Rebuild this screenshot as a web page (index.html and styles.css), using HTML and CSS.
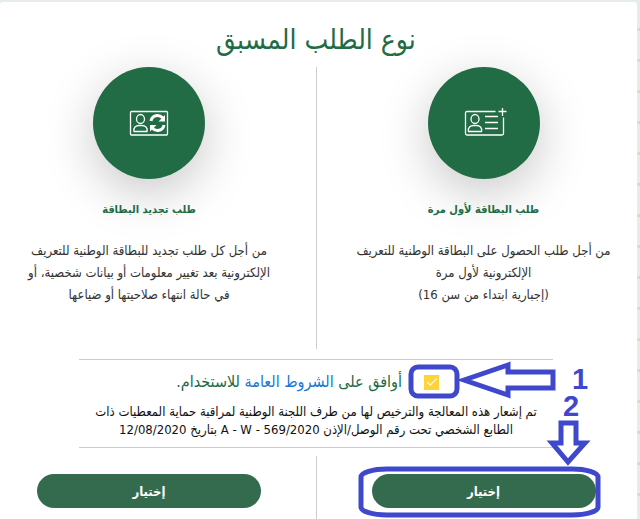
FILE: index.html
```html
<!DOCTYPE html>
<html lang="ar" dir="rtl">
<head>
  <meta charset="UTF-8">
  <meta name="viewport" content="width=device-width, initial-scale=1.0">
  <title>نوع الطلب المسبق</title>
  <link rel="stylesheet" href="styles.css">
</head>
<body>
  <main class="card">
    <h1 class="title">نوع الطلب المسبق</h1>

    <!-- Request types -->
    <div class="columns">
      <section class="column">
        <div class="circle">
          <svg class="icon" viewBox="-2 1 42 28" aria-hidden="true">
            <path d="M30.500 3.500H2q-1.500 0-1.500 1.500v20.500q0 1.500 1.500 1.500h35q1.500 0 1.500-1.500V9.500" />
            <ellipse cx="10" cy="11" rx="4" ry="4.500" />
            <path d="M3.500 23.500c-1-4 2-6 5-6h3c3 0 6 2 5 6zM20 8.500h13M20 14.500h13M20 20.500h13M37.500 0v8M33.500 3.500h8" />
          </svg>
        </div>
        <h2 class="subtitle">طلب البطاقة لأول مرة</h2>
        <p class="text">من أجل طلب الحصول على البطاقة الوطنية للتعريف<br>الإلكترونية لأول مرة<br>(إجبارية ابتداء من سن 16)</p>
      </section>
      <section class="column">
        <div class="circle">
          <svg class="icon" viewBox="-1 1 42 28" aria-hidden="true">
            <rect x="1.500" y="3.500" width="37" height="23.500" rx="1" />
            <ellipse cx="11.500" cy="11" rx="4" ry="4.500" />
            <path d="M5 23.500c-1-4 2-6 5-6h3c3 0 6 2 5 6z" />
            <path class="arrows" d="M22 13c1-6 8-7 12-3M35 17c-1 6-8 7-12 3" />
            <path class="heads" d="M36 7v6.500h-6.500zM21 23.500V17h6.500z" />
          </svg>
        </div>
        <h2 class="subtitle">طلب تجديد البطاقة</h2>
        <p class="text">من أجل كل طلب تجديد للبطاقة الوطنية للتعريف<br>الإلكترونية بعد تغيير معلومات أو بيانات شخصية، أو<br>في حالة انتهاء صلاحيتها أو ضياعها</p>
      </section>
    </div>

    <!-- Terms of use -->
    <div class="terms">
      <div class="agree">
        <input type="checkbox" id="agree" class="check" checked>
        <label for="agree">أوافق على <a href="#">الشروط العامة</a> للاستخدام.</label>
      </div>
      <p class="note">تم إشعار هذه المعالجة والترخيص لها من طرف اللجنة الوطنية لمراقبة حماية المعطيات ذات<br>الطابع الشخصي تحت رقم الوصل/الإذن <bdi dir="ltr">A - W - 569/2020</bdi> بتاريخ <bdi dir="ltr">12/08/2020</bdi></p>
    </div>

    <div class="columns actions">
      <div class="column"><button type="button" class="choose">إختيار</button></div>
      <div class="column"><button type="button" class="choose">إختيار</button></div>
    </div>
  </main>

  <!-- Step markers -->
  <svg class="steps" viewBox="0 0 640 519" aria-hidden="true">
    <rect x="411" y="367" width="46" height="29" rx="7" />
    <path d="M464 380L508 365V372H553V388H508V395Z" />
    <path d="M561 423H576V443H585L568 462L552 443H561Z" />
    <rect x="361" y="469" width="237" height="46" rx="26" ry="8" />
    <text x="572" y="389">1</text>
    <text x="563" y="416">2</text>
  </svg>
</body>
</html>
```

FILE: styles.css
```css
body {
  margin: 0;
  padding: 2px 3px 0 0;
  background: repeating-linear-gradient(#e6ece9 0, #e6ece9 28px, #ddd9bd 28px, #ddd9bd 31px);
  font-family: "DejaVu Sans Condensed", "DejaVu Sans", sans-serif;
  color: #333;
}

.card {
  padding: 14px 5px 0 0;
  background-color: #fff;
  border-radius: 3px 3px 0 0;
  box-shadow: 0 0 2px #e9f1ec;
}

.title {
  margin: 0 0 3px;
  font-size: 28px;
  font-weight: normal;
  line-height: 48px;
  text-align: center;
  color: #216b45;
}

.columns {
  display: grid;
  grid-template-columns: 1fr 1fr;
}

.column {
  min-height: 282px;
  text-align: center;
}

.column:first-child {
  padding-left: 18px;
  border-left: 1px solid #ccc;
}

.column:last-child {
  padding-right: 18px;
}

.circle {
  display: flex;
  align-items: center;
  justify-content: center;
  width: 112px;
  height: 112px;
  margin: 0 auto;
  border-radius: 50%;
  background-color: #216b45;
  box-shadow: 0 14px 50px rgba(0, 0, 0, 0.22);
}

.icon {
  width: 42px;
  height: 28px;
  overflow: visible;
  fill: none;
  stroke: #fff;
  stroke-width: 1.3;
}

.icon .arrows {
  stroke-width: 3;
}

.icon .heads {
  fill: #fff;
  stroke: none;
}

.subtitle {
  margin: 20px 0 19px;
  font-size: 11px;
  line-height: 22px;
  color: #216b45;
}

.text {
  margin: 0;
  font-size: 13px;
  line-height: 22px;
  white-space: nowrap;
}

.terms {
  width: 75%;
  margin: 10px auto 8px;
  box-sizing: border-box;
  border-top: 1px solid #ccc;
  border-bottom: 1px solid #ccc;
}

.agree {
  display: flex;
  align-items: center;
  gap: 22px;
  padding: 8px 114px 0 0;
  font-size: 16px;
  line-height: 28px;
  color: #216b45;
}

.agree a {
  color: #1976d2;
  text-decoration: none;
}

.check {
  appearance: none;
  width: 15px;
  height: 15px;
  margin: 0;
  background-color: #ffd43b;
}

.check:checked::after {
  content: "";
  display: block;
  width: 9px;
  height: 4px;
  margin: 3px auto 0;
  border: solid #fff;
  border-width: 0 0 1px 1px;
  transform: rotate(-45deg);
}

.note {
  margin: 7px 0 8px;
  font-size: 13px;
  line-height: 18px;
  text-align: center;
  color: #111;
  white-space: nowrap;
}

.actions .column {
  min-height: 0;
}

.choose {
  width: 224px;
  height: 34px;
  margin: 18px 0 11px;
  border: none;
  border-radius: 17px;
  background-color: #346b4e;
  color: #fff;
  font-family: inherit;
  font-size: 13px;
  font-weight: bold;
  cursor: pointer;
}

.steps {
  position: absolute;
  top: 0;
  left: 0;
  width: 640px;
  height: 519px;
  direction: ltr;
  fill: none;
  stroke: #3f48cc;
  stroke-width: 5;
  pointer-events: none;
}

.steps text {
  fill: #3f48cc;
  stroke: none;
  font-family: "Liberation Sans", sans-serif;
  font-size: 29px;
  font-weight: bold;
}
```
